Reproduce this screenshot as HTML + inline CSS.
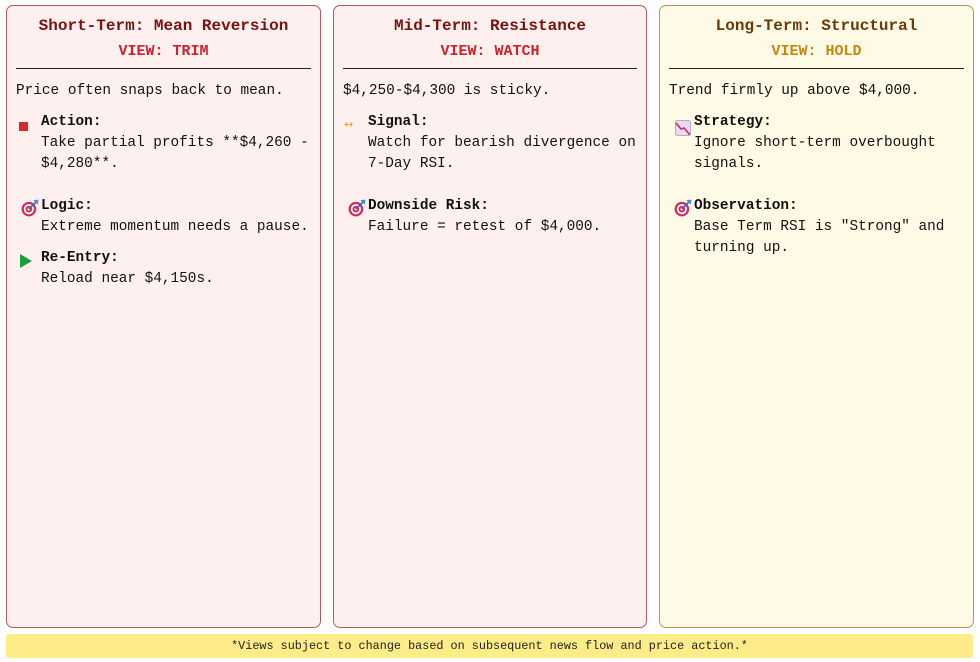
<!DOCTYPE html>
<html><head><meta charset="utf-8"><style>
*{margin:0;padding:0;box-sizing:border-box}
body{width:980px;height:662px;background:#fff;position:relative;font-family:"Liberation Mono","DejaVu Sans Mono",monospace;color:#111;overflow:hidden}
.card{position:absolute;top:5px;height:623px;border:1.5px solid;border-radius:7px}
.r{background:#fff0f0;border-color:#b5595d}
.y{background:#fffae6;border-color:#b8955a}
.t{position:absolute;left:0;right:0;text-align:center;font-weight:bold}
.h1{top:11px;font-size:16px}
.h2{top:37px;font-size:15px}
.hr{position:absolute;left:9px;right:9px;top:62px;border-top:1px solid #222}
.p{position:absolute;font-size:14.4px;line-height:21px;white-space:nowrap}
.b{font-weight:bold}
.ic{position:absolute}
.foot{position:absolute;left:6px;top:634px;width:967px;height:24px;background:#fdec87;border-radius:3px;font-size:11.8px;text-align:center;line-height:24px;color:#222}
</style></head><body>

<div class="card r" style="left:6px;width:315px">
<div class="t h1" style="color:#7a1010">Short-Term: Mean Reversion</div>
<div class="t h2" style="color:#d0202a">VIEW: TRIM</div>
<div class="hr"></div>
<div class="p" style="left:9px;top:75px">Price often snaps back to mean.</div>
<div class="ic" style="left:12px;top:116px;width:9px;height:9px;background:#d42a2a"></div>
<div class="p b" style="left:34px;top:106px">Action:</div>
<div class="p" style="left:34px;top:127px">Take partial profits **$4,260 -<br>$4,280**.</div>
<svg class="ic" style="left:14px;top:193px" width="18" height="18" viewBox="0 0 16 16"><circle cx="7" cy="9" r="6.5" fill="#d42c5a"/><circle cx="7" cy="9" r="4.5" fill="#fff"/><circle cx="7" cy="9" r="3" fill="#d42c5a"/><circle cx="7" cy="9" r="1.2" fill="#fff"/><line x1="7" y1="9" x2="13" y2="3" stroke="#2f6fbf" stroke-width="1.5"/><path d="M11 1 L15.5 0.5 L15 5 Z" fill="#3b8de0"/></svg>
<div class="p b" style="left:34px;top:190px">Logic:</div>
<div class="p" style="left:34px;top:211px">Extreme momentum needs a pause.</div>
<svg class="ic" style="left:13px;top:248px" width="13" height="14"><path d="M0 0 L12 7 L0 14 Z" fill="#1e9e3a"/></svg>
<div class="p b" style="left:34px;top:242px">Re-Entry:</div>
<div class="p" style="left:34px;top:263px">Reload near $4,150s.</div>
</div>

<div class="card r" style="left:333px;width:314px">
<div class="t h1" style="color:#7a1010">Mid-Term: Resistance</div>
<div class="t h2" style="color:#d0202a">VIEW: WATCH</div>
<div class="hr"></div>
<div class="p" style="left:9px;top:75px">$4,250-$4,300 is sticky.</div>
<div class="ic" style="left:10px;top:112px;font-size:11px;color:#e8a020;font-family:'DejaVu Sans',sans-serif">↔</div>
<div class="p b" style="left:34px;top:106px">Signal:</div>
<div class="p" style="left:34px;top:127px">Watch for bearish divergence on<br>7-Day RSI.</div>
<svg class="ic" style="left:14px;top:193px" width="18" height="18" viewBox="0 0 16 16"><circle cx="7" cy="9" r="6.5" fill="#d42c5a"/><circle cx="7" cy="9" r="4.5" fill="#fff"/><circle cx="7" cy="9" r="3" fill="#d42c5a"/><circle cx="7" cy="9" r="1.2" fill="#fff"/><line x1="7" y1="9" x2="13" y2="3" stroke="#2f6fbf" stroke-width="1.5"/><path d="M11 1 L15.5 0.5 L15 5 Z" fill="#3b8de0"/></svg>
<div class="p b" style="left:34px;top:190px">Downside Risk:</div>
<div class="p" style="left:34px;top:211px">Failure = retest of $4,000.</div>
</div>

<div class="card y" style="left:659px;width:315px">
<div class="t h1" style="color:#6b3a08">Long-Term: Structural</div>
<div class="t h2" style="color:#c8860e">VIEW: HOLD</div>
<div class="hr"></div>
<div class="p" style="left:9px;top:75px">Trend firmly up above $4,000.</div>
<svg class="ic" style="left:15px;top:114px" width="17" height="16"><rect x="0.5" y="0.5" width="15" height="15" rx="2" fill="#e6dcef" stroke="#b9a9c8"/><path d="M1 3 L6 9 L9 8 L15 15" stroke="#d4245a" stroke-width="1.6" fill="none"/></svg>
<div class="p b" style="left:34px;top:106px">Strategy:</div>
<div class="p" style="left:34px;top:127px">Ignore short-term overbought<br>signals.</div>
<svg class="ic" style="left:14px;top:193px" width="18" height="18" viewBox="0 0 16 16"><circle cx="7" cy="9" r="6.5" fill="#d42c5a"/><circle cx="7" cy="9" r="4.5" fill="#fff"/><circle cx="7" cy="9" r="3" fill="#d42c5a"/><circle cx="7" cy="9" r="1.2" fill="#fff"/><line x1="7" y1="9" x2="13" y2="3" stroke="#2f6fbf" stroke-width="1.5"/><path d="M11 1 L15.5 0.5 L15 5 Z" fill="#3b8de0"/></svg>
<div class="p b" style="left:34px;top:190px">Observation:</div>
<div class="p" style="left:34px;top:211px">Base Term RSI is "Strong" and<br>turning up.</div>
</div>

<div class="foot">*Views subject to change based on subsequent news flow and price action.*</div>
</body></html>
